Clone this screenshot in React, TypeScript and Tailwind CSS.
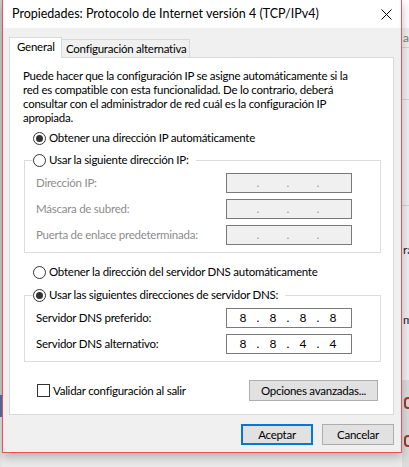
import React from "react";

const FONT = "font-['Lato','Noto_Sans',sans-serif]";
const TXT = "text-[11.5px] tracking-[-0.25px]";

function Radio({ checked }: { checked?: boolean }) {
  return (
    <span className="w-[13px] h-[13px] rounded-full border border-[#333333] bg-white flex items-center justify-center shrink-0">
      {checked && <span className="w-[7px] h-[7px] rounded-full bg-[#333333]" />}
    </span>
  );
}

function RadioRow({ label, checked }: { label: string; checked?: boolean }) {
  return (
    <div className={`h-[16px] flex items-center gap-[3px] ${TXT} leading-[16px] text-black`}>
      <Radio checked={checked} />
      <span className="whitespace-nowrap">{label}</span>
    </div>
  );
}

// IPv4 address box: four octet cells separated by dots
function IpBox({ octets, disabled }: { octets: string[]; disabled?: boolean }) {
  return (
    <div
      className={
        disabled
          ? "w-[126px] h-[20px] border border-[#7a7a7a] bg-[#f0f0f0] flex items-center pl-[3px] text-[12px] text-[#9a9a9a]"
          : "w-[126px] h-[20px] border border-[#7a7a7a] bg-white flex items-center pl-[3px] text-[12px] text-black"
      }
    >
      {octets.map((o, i) => (
        <React.Fragment key={i}>
          <span className="w-[26px] text-center leading-[18px]">{o}</span>
          {i < 3 && <span className="w-[4px] text-center leading-[18px]">.</span>}
        </React.Fragment>
      ))}
    </div>
  );
}

function FieldRow({ label, octets, disabled }: { label: string; octets: string[]; disabled?: boolean }) {
  return (
    <div className="h-[20px] flex items-center justify-between pl-[11px] pr-[28px]">
      <span className={disabled ? `${TXT} text-[#8c8c8c]` : `${TXT} text-black`}>{label}</span>
      <IpBox octets={octets} disabled={disabled} />
    </div>
  );
}

function Group({ legend, checked, children }: { legend: string; checked?: boolean; children: React.ReactNode }) {
  return (
    <fieldset className="mx-[14px] mr-[12px] border border-[#dcdcdc] pb-[7px]">
      <legend className="ml-[8px] pr-[7px]">
        <RadioRow label={legend} checked={checked} />
      </legend>
      <div className="pt-[5px] flex flex-col gap-[6px]">{children}</div>
    </fieldset>
  );
}

function Button({ label, primary, className }: { label: string; primary?: boolean; className?: string }) {
  return (
    <button
      className={
        (primary
          ? "border-2 border-[#0078d7] "
          : "border border-[#adadad] ") +
        `h-[21px] bg-[#e1e1e1] ${TXT} text-black flex items-center justify-center ` +
        (className ?? "")
      }
    >
      {label}
    </button>
  );
}

function TcpIpDialog() {
  return (
    <div className="w-[400px] h-[453px] border-x border-b border-[#e8535b] bg-[#f0f0f0] flex flex-col shadow-[0_4px_10px_rgba(0,0,0,0.25)]">
      {/* title bar */}
      <div className="h-[28px] bg-white flex items-center justify-between pl-[9px] pr-[9px] shrink-0">
        <span className="text-[12.5px] text-black whitespace-nowrap">
          Propiedades: Protocolo de Internet versión 4 (TCP/IPv4)
        </span>
        <svg width="11" height="11" viewBox="0 0 11 11">
          <path d="M0.5 0.5L10.5 10.5M10.5 0.5L0.5 10.5" stroke="#000" strokeWidth="1" />
        </svg>
      </div>

      {/* tabs */}
      <div className="h-[29px] pt-[8px] pl-[6px] flex items-end shrink-0">
        <div className={`relative z-10 -mb-px h-[21px] w-[53px] bg-white border border-b-0 border-[#d9d9d9] pl-[7px] ${TXT} leading-[18px] text-black`}>
          General
        </div>
        <div className={`h-[18px] w-[128px] bg-[#f0f0f0] border border-l-0 border-b-0 border-[#d9d9d9] pl-[4px] ${TXT} leading-[17px] text-black whitespace-nowrap`}>
          Configuración alternativa
        </div>
      </div>

      {/* tab panel */}
      <div className="mx-[6px] mr-[7px] h-[358px] bg-white border border-[#d9d9d9] flex flex-col shrink-0">
        <p className={`pt-[11px] pl-[13px] ${TXT} leading-[14px] text-black`}>
          Puede hacer que la configuración IP se asigne automáticamente si la
          <br />
          red es compatible con esta funcionalidad. De lo contrario, deberá
          <br />
          consultar con el administrador de red cuál es la configuración IP
          <br />
          apropiada.
        </p>

        <div className="mt-[5px] pl-[23px]">
          <RadioRow label="Obtener una dirección IP automáticamente" checked />
        </div>

        <div className="mt-[6px]">
          <Group legend="Usar la siguiente dirección IP:">
            <FieldRow label="Dirección IP:" octets={["", "", "", ""]} disabled />
            <FieldRow label="Máscara de subred:" octets={["", "", "", ""]} disabled />
            <FieldRow label="Puerta de enlace predeterminada:" octets={["", "", "", ""]} disabled />
          </Group>
        </div>

        <div className="mt-[11px] pl-[23px]">
          <RadioRow label="Obtener la dirección del servidor DNS automáticamente" />
        </div>

        <div className="mt-[7px]">
          <Group legend="Usar las siguientes direcciones de servidor DNS:" checked>
            <FieldRow label="Servidor DNS preferido:" octets={["8", "8", "8", "8"]} />
            <FieldRow label="Servidor DNS alternativo:" octets={["8", "8", "4", "4"]} />
          </Group>
        </div>

        <div className="mt-[18px] h-[21px] flex items-center justify-between pl-[27px] pr-[15px]">
          <div className="flex items-center gap-[3px]">
            <span className="w-[13px] h-[13px] border border-[#333333] bg-white" />
            <span className={`${TXT} text-black`}>Validar configuración al salir</span>
          </div>
          <Button label="Opciones avanzadas..." className="w-[129px]" />
        </div>
      </div>

      {/* footer buttons */}
      <div className="mt-[9px] flex justify-end gap-[9px] mr-[7px]">
        <Button label="Aceptar" primary className="w-[72px]" />
        <Button label="Cancelar" className="w-[72px]" />
      </div>
    </div>
  );
}

export default function App() {
  return (
    <div className={`${FONT} w-[409px] h-[467px] overflow-hidden bg-[#ebebeb] flex`}>
      {/* window edge behind, on the left */}
      <div className="w-[2px] flex flex-col shrink-0">
        <div className="h-[395px] bg-[#cfcfcf]" />
        <div className="h-[22px] bg-[#5b6fa8]" />
        <div className="flex-1 bg-[#e6e6e6]" />
      </div>

      <div className="relative z-10 shrink-0">
        <TcpIpDialog />
      </div>

      {/* window behind, on the right */}
      <div className="w-[7px] flex flex-col shrink-0 overflow-hidden text-[12px] whitespace-nowrap">
        <div className="h-[28px] bg-white" />
        <div className="h-[20px] bg-[#f0f0f0] text-[#7a7a7a] leading-[20px] pl-[1px] border-b border-[#d4d4d4]">ar</div>
        <div className="h-[52px] bg-[#f0f0f0] border-b border-[#d4d4d4]" />
        <div className="h-[106px] bg-[#f0f0f0] border-b border-[#d4d4d4]" />
        <div className="h-[36px] bg-[#f0f0f0]" />
        <div className="h-[16px] bg-[#f0f0f0] leading-[16px] text-[#1c1c3c] pl-[1px]">ra</div>
        <div className="h-[54px] bg-[#f0f0f0]" />
        <div className="h-[16px] bg-[#f0f0f0] leading-[16px] text-[#1c1c3c] pl-[1px]">m</div>
        <div className="h-[52px] bg-[#f0f0f0]" />
        <div className="flex-1 bg-[#dcdcdc] flex flex-col items-start pt-[17px] gap-[26px] pl-[2px]">
          <span className="w-[8px] h-[12px] rounded-full border-2 border-[#a33a2a]" />
          <span className="w-[8px] h-[12px] rounded-full border-2 border-[#a33a2a]" />
        </div>
      </div>
    </div>
  );
}
